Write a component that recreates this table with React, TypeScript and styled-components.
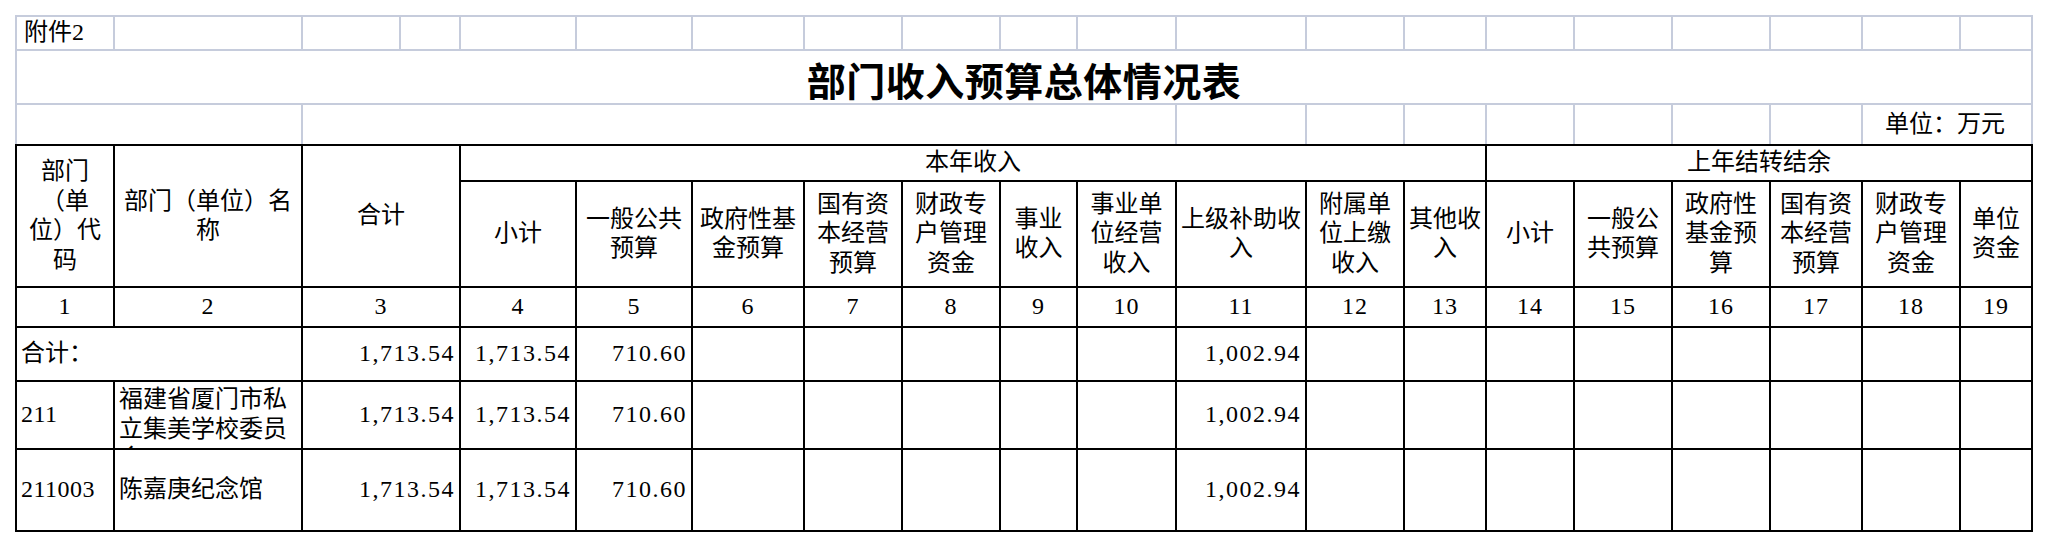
import React from 'react';
import styled, { createGlobalStyle } from 'styled-components';

const GlobalStyle = createGlobalStyle`
  html, body {
    margin: 0;
    padding: 0;
    background: #ffffff;
  }
  body {
    font-family: "Liberation Serif", "Noto Sans CJK SC", serif;
    color: #000000;
  }
`;

const COLS = [98, 188, 98, 60, 116, 116, 112, 98, 98, 77, 99, 130, 98, 82, 88, 98, 98, 92, 98, 72];

const Page = styled.div`
  width: 2048px;
  height: 546px;
  box-sizing: border-box;
  padding: 15px 0 0 15px;
  overflow: hidden;
`;

const Sheet = styled.table<{ $line: string }>`
  border-collapse: collapse;
  table-layout: fixed;
  width: 2018px;
  font-size: 24px;
  line-height: 29.5px;
  text-spacing-trim: space-all;

  td {
    border: 2px solid ${(p) => p.$line};
    padding: 0 4px;
    white-space: normal;
    word-break: normal;
  }
`;

const GridSheet = styled(Sheet)`
  tr:last-child td {
    border-bottom: none;
  }
`;

const Row = styled.tr<{ $h: number }>`
  height: ${(p) => p.$h}px;
`;

const Cell = styled.td<{ $align?: 'left' | 'center' | 'right' }>`
  text-align: ${(p) => p.$align ?? 'center'};
  vertical-align: middle;
`;

const NoteCell = styled.td`
  text-align: left;
  vertical-align: middle;
  && {
    padding-left: 7px;
  }
`;

const TitleCell = styled.td`
  text-align: center;
  vertical-align: middle;
  font-family: "Noto Sans CJK SC", sans-serif;
  font-size: 39px;
  line-height: 44px;
  font-weight: 700;
  letter-spacing: 0.5px;
  && {
    padding-top: 4px;
  }
`;

const UnitCell = styled.td`
  text-align: right;
  vertical-align: middle;
  && {
    padding-right: 26px;
  }
`;

const NumCell = styled.td`
  text-align: right;
  vertical-align: middle;
  letter-spacing: 1.5px;
  && {
    padding-right: 4px;
  }
`;

const IndexCell = styled.td`
  text-align: center;
  vertical-align: middle;
  letter-spacing: 1px;
`;

const NameCell = styled.td<{ $clip: boolean }>`
  text-align: left;
  vertical-align: ${(p) => (p.$clip ? 'top' : 'middle')};
`;

const NameClip = styled.div<{ $h: number }>`
  height: ${(p) => p.$h}px;
  box-sizing: border-box;
  padding-top: 3px;
  overflow: hidden;
`;

const CodeCell = styled.td`
  text-align: left;
  vertical-align: middle;
  letter-spacing: 0.5px;
`;

const Cols = () => (
  <colgroup>
    {COLS.map((w, i) => (
      <col key={i} style={{ width: w }} />
    ))}
  </colgroup>
);

const currentIncome = [
  '小计',
  '一般公共预算',
  '政府性基金预算',
  '国有资本经营预算',
  '财政专户管理资金',
  '事业收入',
  '事业单位经营收入',
  '上级补助收入',
  '附属单位上缴收入',
  '其他收入',
];

const carryOver = ['小计', '一般公共预算', '政府性基金预算', '国有资本经营预算', '财政专户管理资金', '单位资金'];

type Amounts = { total: string; sub: string; general: string; upper: string };

const amounts: Amounts = { total: '1,713.54', sub: '1,713.54', general: '710.60', upper: '1,002.94' };

const rows = [
  { code: '211', name: '福建省厦门市私立集美学校委员会', h: 68, clip: true },
  { code: '211003', name: '陈嘉庚纪念馆', h: 82, clip: false },
];

const AmountCells = ({ a }: { a: Amounts }) => (
  <>
    <NumCell colSpan={2}>{a.total}</NumCell>
    <NumCell>{a.sub}</NumCell>
    <NumCell>{a.general}</NumCell>
    {Array.from({ length: 5 }).map((_, i) => (
      <Cell key={`g${i}`} />
    ))}
    <NumCell>{a.upper}</NumCell>
    {Array.from({ length: 8 }).map((_, i) => (
      <Cell key={`m${i}`} />
    ))}
  </>
);

export default function App() {
  return (
    <Page>
      <GlobalStyle />
      <GridSheet $line="#c6ccdc">
        <Cols />
        <tbody>
          <Row $h={34}>
            <NoteCell>附件2</NoteCell>
            {Array.from({ length: 19 }).map((_, i) => (
              <Cell key={i} />
            ))}
          </Row>
          <Row $h={54}>
            <TitleCell colSpan={20}>部门收入预算总体情况表</TitleCell>
          </Row>
          <Row $h={40}>
            <Cell colSpan={2} />
            <Cell colSpan={9} />
            {Array.from({ length: 7 }).map((_, i) => (
              <Cell key={i} />
            ))}
            <UnitCell colSpan={2}>单位：万元</UnitCell>
          </Row>
        </tbody>
      </GridSheet>
      <Sheet $line="#000000">
        <Cols />
        <tbody>
          <Row $h={36}>
            <Cell rowSpan={2}>部门（单位）代码</Cell>
            <Cell rowSpan={2}>部门（单位）名称</Cell>
            <Cell rowSpan={2} colSpan={2}>
              合计
            </Cell>
            <Cell colSpan={10}>本年收入</Cell>
            <Cell colSpan={6}>上年结转结余</Cell>
          </Row>
          <Row $h={106}>
            {currentIncome.map((t, i) => (
              <Cell key={`c${i}`}>{t}</Cell>
            ))}
            {carryOver.map((t, i) => (
              <Cell key={`o${i}`}>{t}</Cell>
            ))}
          </Row>
          <Row $h={40}>
            <IndexCell>1</IndexCell>
            <IndexCell>2</IndexCell>
            <IndexCell colSpan={2}>3</IndexCell>
            {Array.from({ length: 16 }).map((_, i) => (
              <IndexCell key={i}>{i + 4}</IndexCell>
            ))}
          </Row>
          <Row $h={54}>
            <Cell colSpan={2} $align="left">
              合计：
            </Cell>
            <AmountCells a={amounts} />
          </Row>
          {rows.map((r) => (
            <Row key={r.code} $h={r.h}>
              <CodeCell>{r.code}</CodeCell>
              <NameCell $clip={r.clip}>
                {r.clip ? <NameClip $h={r.h - 2}>{r.name}</NameClip> : r.name}
              </NameCell>
              <AmountCells a={amounts} />
            </Row>
          ))}
        </tbody>
      </Sheet>
    </Page>
  );
}
